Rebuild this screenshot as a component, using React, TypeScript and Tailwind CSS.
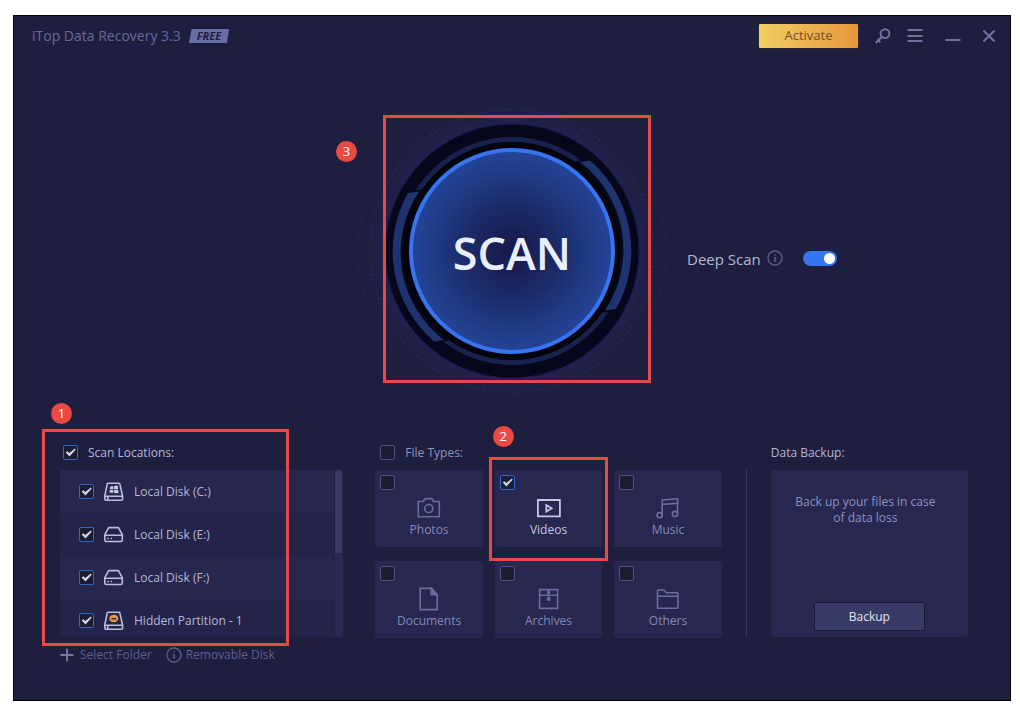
import { useState } from "react";
import type { ReactNode } from "react";
import { clsx } from "clsx";

const LOCATIONS = [
  { id: "c", name: "Local Disk (C:)", kind: "system" },
  { id: "e", name: "Local Disk (E:)", kind: "disk" },
  { id: "f", name: "Local Disk (F:)", kind: "disk" },
  { id: "hidden", name: "Hidden Partition - 1", kind: "hidden" },
];

const FILE_TYPES = ["Photos", "Videos", "Music", "Documents", "Archives", "Others"];

type CheckboxProps = {
  id: string;
  label?: string;
  checked: boolean;
  onChange: (checked: boolean) => void;
};

function Checkbox({ id, checked, onChange }: CheckboxProps) {
  return (
    <span className="grid size-[15px] shrink-0 place-items-center">
      <input
        id={id}
        type="checkbox"
        checked={checked}
        onChange={(e) => onChange(e.target.checked)}
        className="col-start-1 row-start-1 size-[15px] appearance-none rounded-[2px] border border-[#50517c] bg-[#1c1c32] checked:border-[#2f66d0]"
      />
      {checked && (
        <svg viewBox="0 0 15 15" className="pointer-events-none col-start-1 row-start-1 size-[15px]">
          <path d="M2.6 7.6 4.4 6.2 6.3 8 11.8 3.6 12.7 4.7 6.5 11.4Z" fill="#ccd3ea" />
        </svg>
      )}
    </span>
  );
}

function InfoIcon() {
  return (
    <svg viewBox="0 0 16 16" className="size-4 shrink-0" fill="none" stroke="currentColor" strokeWidth="1.3">
      <circle cx="8" cy="8" r="7" />
      <path d="M8 7v5M8 4.2v1.4" strokeWidth="1.5" />
    </svg>
  );
}

function DiskIcon({ kind }: { kind: string }) {
  if (kind === "disk") {
    return (
      <svg viewBox="0 0 20 20" className="size-5 shrink-0" fill="none" stroke="#b9bedb" strokeWidth="1.6">
        <path d="M4.6 2.6h9.8l3.9 7v5.2q0 1.7-1.5 1.7H2.3q-1.5 0-1.5-1.7V9.6Z" strokeLinejoin="round" />
        <path d="M.8 10.2h17.5" />
        <path d="M3.4 13.5h1.5M6.6 13.5h1.5" />
      </svg>
    );
  }
  return (
    <svg viewBox="0 0 20 20" className="size-5 shrink-0" fill="none" stroke="#b9bedb" strokeWidth="1.6">
      <path d="M4 1.2h11q.6 0 .8.7l2.8 12.3v3q0 1-1 1H1.8q-1 0-1-1v-3L3.2 1.9q.2-.7.8-.7Z" />
      <path d="M.8 14.2h17.8M3.8 14.4v3.6" />
      {kind === "system" ? (
        <g fill="#c8cce4" stroke="none">
          <path d="M6.3 4.5 9.3 4v3H5.9ZM10.1 3.9l3.7-.4.3 3.5h-4ZM5.8 7.7h3.5v3.1l-3.8-.4ZM10.1 7.7h4.1l.3 3.6-4.4-.4Z" />
        </g>
      ) : (
        <>
          <ellipse cx="9.8" cy="7.5" rx="4.5" ry="3.8" fill="#e39b50" stroke="none" />
          <path d="M7.4 7.7h4.8" stroke="#3a2c3c" />
        </>
      )}
    </svg>
  );
}

const TYPE_DRAWINGS: Record<string, ReactNode> = {
  Photos: (
    <>
      <path d="M1.3 5.5h5l2-2.9h6.4l2 2.9h5.6v15.2H1.3Z" />
      <circle cx="11.8" cy="12.6" r="4.1" />
    </>
  ),
  Videos: (
    <>
      <path d="M.9 4h22v16.4H.9Z" strokeWidth="1.8" />
      <path d="M9.3 9v6.6l5.4-3.3Z" strokeWidth="1.8" />
    </>
  ),
  Music: (
    <>
      <circle cx="3.6" cy="19.2" r="2.6" />
      <circle cx="19" cy="18" r="2.6" />
      <path d="M6.2 19.2V4l15.4-1.2V18M6.2 8.4l15.4-1.2" />
    </>
  ),
  Documents: (
    <>
      <path d="M3.2 1.4h11l6 6.4v14.8h-17Z" />
      <path d="M14.2 1.4v6.4h6Z" fill="currentColor" />
    </>
  ),
  Archives: (
    <>
      <path d="M2.6 2.6h18v18.8h-18ZM2.6 8.2h18M11.6 2.6v10" />
      <circle cx="11.6" cy="5.6" r="1" fill="currentColor" />
      <circle cx="11.6" cy="12" r="1.2" fill="currentColor" />
    </>
  ),
  Others: <path d="M1.5 21.2V4.2q0-1.2 1.2-1.2h5.2l2.4 2.8h10.4q1.3 0 1.3 1.2v13q0 1.2-1.2 1.2ZM1.5 9.2H22" />,
};

function Marker({ children, className }: { children: ReactNode; className: string }) {
  return (
    <span
      className={clsx(
        "pointer-events-none absolute flex size-[21px] items-center justify-center rounded-full bg-[#e94b43] text-[13px] leading-none text-white",
        className
      )}
    >
      {children}
    </span>
  );
}

function Highlight({ className }: { className: string }) {
  return <span className={clsx("pointer-events-none absolute border-3 border-[#e54a44]", className)} />;
}

function ScanDial() {
  return (
    <svg viewBox="-155 -155 310 310" className="size-full" fill="none">
      <defs>
        <radialGradient id="halo">
          <stop offset="0.82" stopColor="#222256" />
          <stop offset="1" stopColor="#1e1e3f" stopOpacity="0" />
        </radialGradient>
        <radialGradient id="face">
          <stop offset="0" stopColor="#171748" />
          <stop offset="0.45" stopColor="#1b2a68" />
          <stop offset="0.8" stopColor="#213c87" />
          <stop offset="1" stopColor="#254499" />
        </radialGradient>
      </defs>
      <circle r="150" fill="url(#halo)" />
      <circle r="154" stroke="#1f2550" />
      <circle r="141.5" stroke="#20305f" strokeWidth="1.8" strokeDasharray="1.4 3.6" />
      <circle r="127" fill="#07071b" stroke="#131a4a" />
      <circle r="111.5" stroke="#18224e" strokeWidth="5" />
      {/* heavy segments on both sides of the rim */}
      <path d="M64-88 78-91A119 119 0 0 1 104 59L92 60Z" fill="#07071b" stroke="#06061a" strokeWidth="3" />
      <path d="M-64 88-78 91A119 119 0 0 1-104-59L-92-60Z" fill="#07071b" stroke="#06061a" strokeWidth="3" />
      <path d="M68-89 78-90.5A119 119 0 0 1 104 58L93 59.5A110 110 0 0 0 68-89Z" fill="#1f346e" />
      <path d="M-68 89-78 90.5A119 119 0 0 1-104-58L-93-59.5A110 110 0 0 0-68 89Z" fill="#1f346e" />
      <circle r="106" fill="#04040f" stroke="#04040f" strokeWidth="6" />
      <circle r="101" fill="url(#face)" stroke="#3674f0" strokeWidth="4" />
    </svg>
  );
}

export default function App() {
  const [locations, setLocations] = useState(LOCATIONS.map((l) => l.id));
  const [types, setTypes] = useState(["Videos"]);
  const [deepScan, setDeepScan] = useState(true);

  const toggle = (list: string[], item: string, on: boolean) =>
    on ? [...list, item] : list.filter((i) => i !== item);

  return (
    <div className="flex min-h-screen bg-white pt-[15px] pr-[9px] pb-[9px] pl-[13px] font-['Open_Sans','Noto_Sans',sans-serif] text-xs text-[#b4b9d6]">
      <div className="flex flex-1 flex-col border border-black bg-[#1e1e3f]">
        {/* Title bar */}
        <header className="flex h-10 items-center justify-between pr-[13px] pl-[18px]">
          <div className="flex items-center gap-2 text-sm font-medium text-[#6869a0]">
            <h1>iTop Data Recovery 3.3</h1>
            <span className="bg-[#6a6ca6] px-2 text-[11px] leading-[14px] font-bold text-[#1e1e3f] italic [clip-path:polygon(7%_0,100%_0,94%_100%,0_100%)]">
              FREE
            </span>
          </div>
          <div className="flex items-center text-[#70719f]">
            <button className="mr-4 h-[26px] w-[101px] rounded-xs border border-[#2c2433] bg-linear-to-r from-[#efce62] to-[#e8963c] text-[13px] text-[#71501f]">
              Activate
            </button>
            <button aria-label="Register" className="mr-4">
              <svg viewBox="0 0 16 16" className="size-4" fill="none" stroke="currentColor" strokeWidth="2">
                <circle cx="10" cy="5.6" r="4.4" />
                <path d="M6.8 8.8.8 15M2.4 11.4l3 3" />
              </svg>
            </button>
            <button aria-label="Menu" className="mr-[22px]">
              <svg viewBox="0 0 16 16" className="size-4" stroke="currentColor" strokeWidth="2">
                <path d="M.5 2h15M.5 8h15M.5 13h15" />
              </svg>
            </button>
            <button aria-label="Minimize" className="mr-5">
              <svg viewBox="0 0 16 16" className="size-4" stroke="currentColor" strokeWidth="2">
                <path d="M.5 12h15" />
              </svg>
            </button>
            <button aria-label="Close">
              <svg viewBox="0 0 16 16" className="size-4" stroke="currentColor" strokeWidth="2">
                <path d="m2.5 2.5 11 11M13.5 2.5l-11 11" />
              </svg>
            </button>
          </div>
        </header>

        {/* Scan */}
        <main className="grid flex-1 grid-cols-[1fr_auto_1fr] items-center">
          <div className="relative col-start-2 size-[310px]">
            <button className="grid size-full place-items-center rounded-full">
              <span className="col-start-1 row-start-1 size-full">
                <ScanDial />
              </span>
              <span className="col-start-1 row-start-1 pt-1 text-[45px] leading-none font-semibold text-[#e8eefc]">
                SCAN
              </span>
            </button>
            <Highlight className="top-[19px] left-[26px] size-[268px]" />
            <Marker className="top-[45px] -left-[21px]">3</Marker>
          </div>
          <div className="flex items-center pt-4 pl-5">
            <label htmlFor="deep-scan" className="text-[15px]">
              Deep Scan
            </label>
            <span className="mr-5 ml-1.5 text-[#5d5e8c]">
              <InfoIcon />
            </span>
            <input
              id="deep-scan"
              type="checkbox"
              role="switch"
              checked={deepScan}
              onChange={(e) => setDeepScan(e.target.checked)}
              className="flex h-[15px] w-[34px] appearance-none items-center rounded-full bg-[#50517c] px-0.5 before:size-[11px] before:rounded-full before:bg-white checked:justify-end checked:bg-[#3875f2]"
            />
          </div>
        </main>

        <div className="flex gap-6 pr-[42px] pb-[37px] pl-[46px]">
          {/* Scan locations */}
          <section className="relative mr-2 flex-[283]">
            <div className="mb-2.5 flex h-[15px] items-center gap-2.5 pl-[3px]">
              <Checkbox
                id="all-locations"
                checked={locations.length === LOCATIONS.length}
                onChange={(on) => setLocations(on ? LOCATIONS.map((l) => l.id) : [])}
              />
              <label htmlFor="all-locations">Scan Locations:</label>
            </div>
            <div className="flex h-[167px] overflow-hidden rounded-xs bg-[#26264f]">
              <ul className="flex-1">
                {LOCATIONS.map((location) => (
                  <li
                    key={location.id}
                    className="flex h-[43px] items-center gap-2.5 bg-[#24244b] pl-[19px] odd:bg-[#26264f]"
                  >
                    <Checkbox
                      id={`location-${location.id}`}
                      checked={locations.includes(location.id)}
                      onChange={(on) => setLocations(toggle(locations, location.id, on))}
                    />
                    <DiskIcon kind={location.kind} />
                    <label htmlFor={`location-${location.id}`}>{location.name}</label>
                  </li>
                ))}
              </ul>
              <div className="w-[9px] border-l border-[#20203f] bg-[#292953]">
                <div className="h-[83px] w-[7px] bg-[#383962]" />
              </div>
            </div>
            <div className="mt-2.5 flex h-4 items-center text-[#5f608f]">
              <button className="mr-3.5 flex items-center gap-1.5">
                <svg viewBox="0 0 14 14" className="size-3.5" stroke="#7677a4" strokeWidth="2">
                  <path d="M7 .5v13M.5 7h13" />
                </svg>
                Select Folder
              </button>
              <button className="flex items-center gap-1">
                <InfoIcon />
                Removable Disk
              </button>
            </div>
            <Highlight className="-top-4 -left-[18px] h-[217px] w-[247px]" />
            <Marker className="-top-[42px] -left-[9px]">1</Marker>
          </section>

          {/* File types */}
          <section className="flex-[346]">
            <div className="mb-2.5 flex h-[15px] items-center gap-2.5 pl-[5px] text-[#9096bd]">
              <Checkbox
                id="all-types"
                checked={types.length === FILE_TYPES.length}
                onChange={(on) => setTypes(on ? FILE_TYPES : [])}
              />
              <label htmlFor="all-types">File Types:</label>
            </div>
            <div className="grid grid-cols-3 gap-x-3 gap-y-3.5">
              {FILE_TYPES.map((type) => (
                <div
                  key={type}
                  className={clsx(
                    "relative flex h-[77px] flex-col rounded-xs bg-[#27274f] px-[5px] pt-[5px]",
                    types.includes(type) ? "text-[#c3c8e2]" : "text-[#8489b8]"
                  )}
                >
                  <Checkbox
                    id={`type-${type}`}
                    checked={types.includes(type)}
                    onChange={(on) => setTypes(toggle(types, type, on))}
                  />
                  <label htmlFor={`type-${type}`} className="flex flex-col items-center gap-0.5 pt-1.5">
                    <svg
                      viewBox="0 0 24 24"
                      className={clsx("size-6", !types.includes(type) && "text-[#6b6da0]")}
                      fill="none"
                      stroke="currentColor"
                      strokeWidth="1.6"
                    >
                      {TYPE_DRAWINGS[type]}
                    </svg>
                    {type}
                  </label>
                  {type === "Videos" && (
                    <>
                      <Highlight className="-inset-x-1.5 -top-[13px] -bottom-3.5" />
                      <Marker className="-top-11 -left-0.5">2</Marker>
                    </>
                  )}
                </div>
              ))}
            </div>
          </section>

          <div className="mt-[25px] mb-[26px] w-px bg-[#38385f]" />

          {/* Backup */}
          <section className="flex-[197]">
            <h2 className="mb-2.5 h-[15px] leading-4">Data Backup:</h2>
            <div className="flex h-[167px] flex-col items-center justify-between rounded-sm bg-[#27274f] px-5 pt-6 pb-1.5 text-center">
              <p className="pr-2 leading-4 text-[#8c92c4]">Back up your files in case of data loss</p>
              <button className="h-[29px] w-[111px] rounded-xs border border-[#191934] bg-[#3a3a66] text-[#e2e5f2]">
                Backup
              </button>
            </div>
          </section>
        </div>
      </div>
    </div>
  );
}
